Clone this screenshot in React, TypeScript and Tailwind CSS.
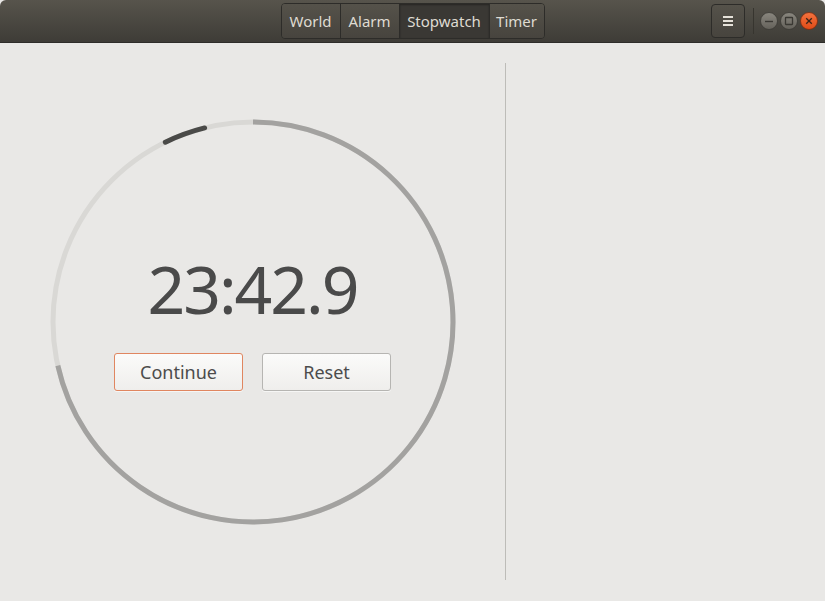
import React from "react";

const R = 200;

function polar(deg: number, r: number, cx: number, cy: number) {
  const a = ((deg - 90) * Math.PI) / 180;
  return [cx + r * Math.cos(a), cy + r * Math.sin(a)];
}
function arc(startDeg: number, endDeg: number, r: number, cx: number, cy: number) {
  const [x1, y1] = polar(startDeg, r, cx, cy);
  const [x2, y2] = polar(endDeg, r, cx, cy);
  const large = endDeg - startDeg > 180 ? 1 : 0;
  return `M ${x1} ${y1} A ${r} ${r} 0 ${large} 1 ${x2} ${y2}`;
}

export default function App() {
  const tabs: { t: string; w: string }[] = [
    { t: "World", w: "w-[58px]" },
    { t: "Alarm", w: "w-[59px]" },
    { t: "Stopwatch", w: "w-[90px]" },
    { t: "Timer", w: "w-[55px]" },
  ];
  return (
    <div
      className="w-[825px] h-[601px] bg-[#e9e8e6] flex flex-col overflow-hidden"
      style={{ fontFamily: '"Noto Sans", "Open Sans", sans-serif' }}
    >
      {/* Header bar */}
      <div className="h-[43px] shrink-0 rounded-t-[6px] bg-gradient-to-b from-[#57544c] to-[#3e3c37] border-b border-[#2e2d2a] relative flex items-center justify-center">
        <div className="flex h-[36px] rounded-[4px] border border-[#2d2c29] overflow-hidden shadow-[inset_0_1px_0_rgba(255,255,255,0.06)]">
          {tabs.map(({ t, w }, i) => (
            <div
              key={t}
              className={
                "flex items-center justify-center text-[15px] text-[#dfdbd2] " +
                w +
                " " +
                (i > 0 ? "border-l border-[#2d2c29] " : "") +
                (t === "Stopwatch"
                  ? "bg-[#3a3834] shadow-[inset_0_1px_2px_rgba(0,0,0,0.35)]"
                  : "bg-gradient-to-b from-[#55524a] to-[#47443e]")
              }
            >
              {t}
            </div>
          ))}
        </div>
        {/* right side */}
        <div className="absolute right-[7px] top-0 h-full flex items-center">
          <div className="w-[34px] h-[34px] rounded-[4px] border border-[#2d2c29] bg-gradient-to-b from-[#55524a] to-[#47443e] flex flex-col items-center justify-center gap-[2px]">
            <div className="w-[10px] h-[2px] bg-[#e6e2da]" />
            <div className="w-[10px] h-[2px] bg-[#e6e2da]" />
            <div className="w-[10px] h-[2px] bg-[#e6e2da]" />
          </div>
          <div className="w-px h-[26px] bg-[#37352f] ml-[8px] mr-[6px]" />
          <div className="flex gap-[2px]">
            <svg width="18" height="18" viewBox="0 0 18 18">
              <defs>
                <linearGradient id="g1" x1="0" y1="0" x2="0" y2="1">
                  <stop offset="0" stopColor="#8a877f" />
                  <stop offset="1" stopColor="#64615a" />
                </linearGradient>
                <linearGradient id="g2" x1="0" y1="0" x2="0" y2="1">
                  <stop offset="0" stopColor="#f4733f" />
                  <stop offset="1" stopColor="#df4a16" />
                </linearGradient>
              </defs>
              <circle cx="9" cy="9" r="8.5" fill="url(#g1)" stroke="#3a3833" strokeWidth="0.8" />
              <line x1="5" y1="9.5" x2="13" y2="9.5" stroke="#3a3833" strokeWidth="1.4" />
            </svg>
            <svg width="18" height="18" viewBox="0 0 18 18">
              <circle cx="9" cy="9" r="8.5" fill="url(#g1)" stroke="#3a3833" strokeWidth="0.8" />
              <rect x="5.5" y="5.5" width="7" height="7" fill="none" stroke="#3a3833" strokeWidth="1.3" rx="0.5" />
            </svg>
            <svg width="18" height="18" viewBox="0 0 18 18">
              <circle cx="9" cy="9" r="8.5" fill="url(#g2)" stroke="#7a2c10" strokeWidth="0.8" />
              <line x1="6.2" y1="6.2" x2="11.8" y2="11.8" stroke="#3a2418" strokeWidth="1.3" />
              <line x1="11.8" y1="6.2" x2="6.2" y2="11.8" stroke="#3a2418" strokeWidth="1.3" />
            </svg>
          </div>
        </div>
      </div>

      {/* Body */}
      <div className="flex-1 flex">
        <div className="w-[505px] flex items-center justify-center">
          <div className="relative w-[410px] h-[410px]">
            <svg className="absolute inset-0" width="410" height="410" viewBox="0 0 410 410">
              <circle cx="205" cy="205" r={R} fill="none" stroke="#d9d8d5" strokeWidth="5" />
              <path d={arc(0, 257.4, R, 205, 205)} fill="none" stroke="#a3a2a0" strokeWidth="5" />
              <path d={arc(334, 346, R, 205, 205)} fill="none" stroke="#4a4a48" strokeWidth="5" strokeLinecap="round" />
            </svg>
            <div className="relative flex flex-col items-center pt-[138px]">
              <div className="text-[66px] leading-none text-[#4a4a4a] tracking-[-2px]">23:42.9</div>
              <div className="flex gap-[19px] mt-[32px]">
                <button className="w-[129px] h-[38px] rounded-[3px] border border-[#e08660] bg-gradient-to-b from-[#fbfbfa] to-[#efeeec] text-[18px] text-[#4c4c4c] shadow-[0_1px_0_rgba(255,255,255,0.6)]">
                  Continue
                </button>
                <button className="w-[129px] h-[38px] rounded-[3px] border border-[#b6b5b2] bg-gradient-to-b from-[#fbfbfa] to-[#efeeec] text-[18px] text-[#4c4c4c] shadow-[0_1px_0_rgba(255,255,255,0.6)]">
                  Reset
                </button>
              </div>
            </div>
          </div>
        </div>
        <div className="py-[20px] pb-[21px] flex">
          <div className="w-px bg-[#bdbcb8]" />
        </div>
        <div className="flex-1" />
      </div>
    </div>
  );
}
